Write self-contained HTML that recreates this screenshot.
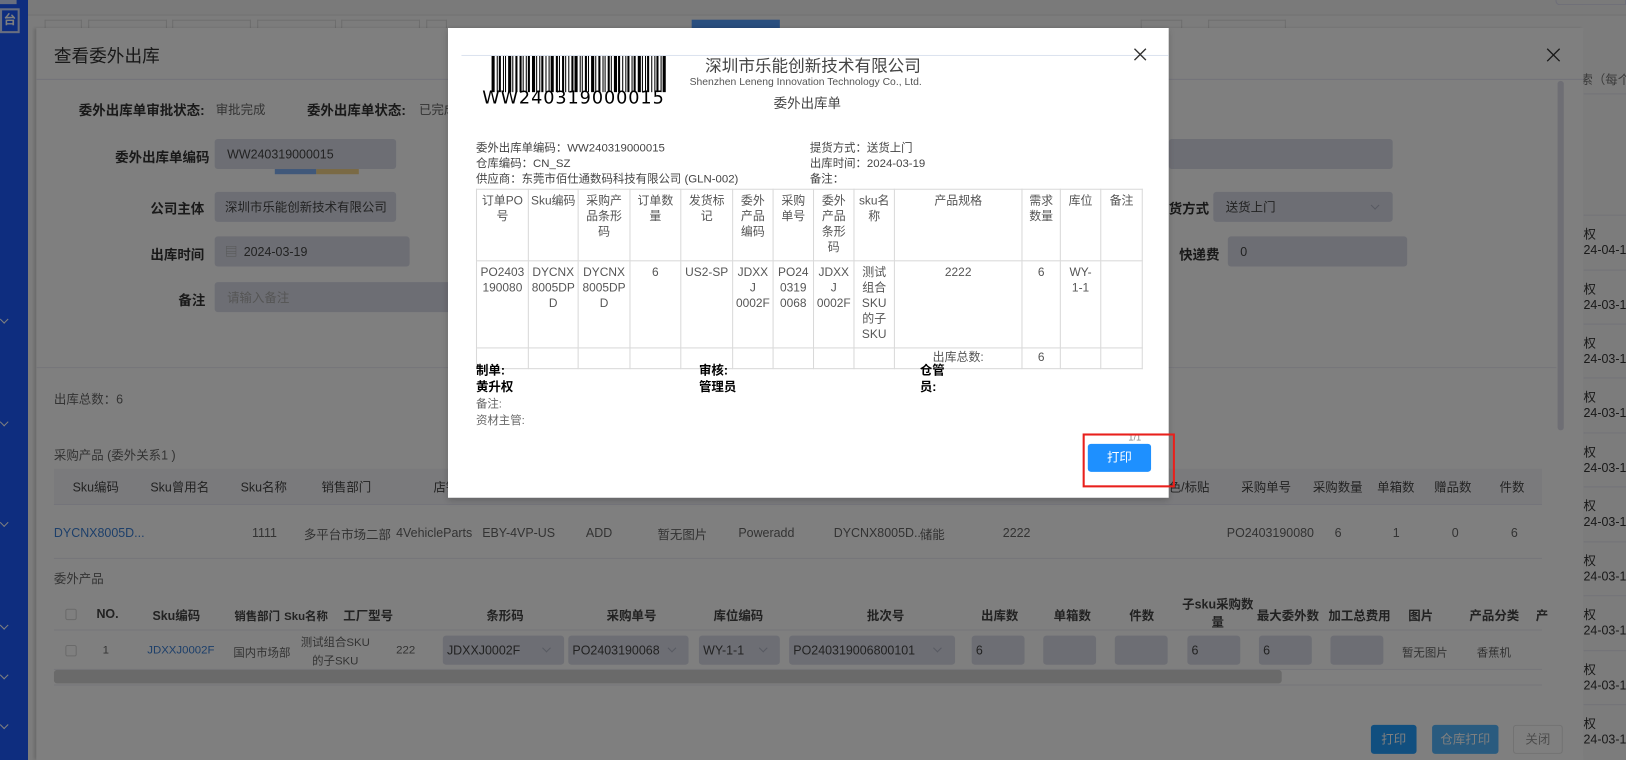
<!DOCTYPE html>
<html style="width:1626px;height:760px;overflow:hidden"><head><meta charset="utf-8"><style>
*{margin:0;padding:0;box-sizing:border-box}
body{width:1626px;height:760px;overflow:hidden;position:relative;background:#f8f8f8;font-family:"Liberation Sans","Noto Sans CJK SC",sans-serif;font-size:12px;color:#333}
#w{position:absolute;left:0;top:0;width:1568px;height:733px;overflow:hidden;transform:scale(1.037);transform-origin:0 0}
.a{position:absolute;white-space:nowrap}
.lb{color:#333;font-weight:bold;font-size:13px}
.v{color:#666;font-size:12px}
.inp{position:absolute;background:#dadde9;border-radius:3px;color:#444;font-size:12px;padding-left:12px;display:flex;align-items:center}
.th{color:#444;font-size:12px}
.td{color:#666;font-size:12px}
.blue{color:#3a7fd5}
.m{color:#444;font-size:11px}
table{border-collapse:collapse;position:absolute;left:459px;top:182px;width:642px;table-layout:fixed}
td{border:1px solid #d9d9d9;font-size:11.5px;color:#555;text-align:center;vertical-align:top;padding:4px 2px;line-height:15px;word-break:break-all}
.chev{position:absolute;width:6px;height:6px;border-right:1px solid #b0b4c4;border-bottom:1px solid #b0b4c4;transform:rotate(45deg)}
#bc{display:flex;justify-content:space-between}
.bar{display:block;height:35px;background:#000}
</style></head><body>
<div id="w">
<!-- sidebar -->
<div class="a" style="left:0;top:0;width:27px;height:733px;background:#1c5bff"></div>
<div class="a" style="left:0;top:8px;width:19px;height:24px;border:2px solid #d0dcff;color:#fff;font-size:12px;font-weight:bold;text-align:center;line-height:18px">台</div>
<div class="a" style="left:0;top:0;width:16px;height:4px;background:#d0dcff"></div>
<div class="chev" style="left:1px;top:305px;border-color:#fff"></div>
<div class="chev" style="left:1px;top:404px;border-color:#fff"></div>
<div class="chev" style="left:1px;top:501px;border-color:#fff"></div>
<div class="chev" style="left:1px;top:600px;border-color:#fff"></div>
<div class="chev" style="left:1px;top:648px;border-color:#fff"></div>
<div class="chev" style="left:1px;top:696px;border-color:#fff"></div>
<!-- top bar -->
<div class="a" style="left:27px;top:0;width:1541px;height:15px;background:#f4f4f4;border-bottom:1px solid #e4e4e4"></div>
<div class="a" style="left:1500px;top:0;width:68px;height:5px;border:1px solid #dcdcf0;border-top:none;border-radius:0 0 0 4px"></div>
<div class="a" style="left:43px;top:19px;width:36px;height:10px;border:1px solid #dcdcdc;border-bottom:none"></div>
<div class="a" style="left:85px;top:19px;width:76px;height:10px;border:1px solid #dcdcdc;border-bottom:none"></div>
<div class="a" style="left:166px;top:19px;width:76px;height:10px;border:1px solid #dcdcdc;border-bottom:none"></div>
<div class="a" style="left:248px;top:19px;width:76px;height:10px;border:1px solid #dcdcdc;border-bottom:none"></div>
<div class="a" style="left:329px;top:19px;width:76px;height:10px;border:1px solid #dcdcdc;border-bottom:none"></div>
<div class="a" style="left:411px;top:19px;width:20px;height:10px;border:1px solid #dcdcdc;border-bottom:none"></div>
<div class="a" style="left:667px;top:19px;width:85px;height:10px;background:#549eff"></div>
<div class="a" style="left:1100px;top:19px;width:40px;height:10px;border:1px solid #dcdcdc;border-bottom:none"></div>
<div class="a" style="left:1165px;top:19px;width:75px;height:10px;border:1px solid #dcdcdc;border-bottom:none"></div>
<!-- right outside list -->
<div class="a" style="left:1527px;top:30px;width:41px;height:703px;background:#f8f8f8"></div>
<div class="a v" style="left:1524px;top:68px;font-size:12px;color:#777">索（每个</div>
<div class="a" style="left:1527px;top:90px;width:41px;height:1px;background:#e6e6f0"></div>
<div id="rl"></div>
<!-- drawer -->
<div class="a" style="left:35px;top:27px;width:1492px;height:706px;background:#fff;box-shadow:-2px 0 3px rgba(0,0,0,.15)"></div>
<div class="a" style="left:52px;top:44px;font-size:17px;color:#333;line-height:22px">查看委外出库</div>
<div class="a" style="left:35px;top:76px;width:1492px;height:1px;background:#e6e6f4"></div>
<svg class="a" style="left:1491px;top:46px" width="14" height="14" viewBox="0 0 14 14"><path d="M1 1L13 13M13 1L1 13" stroke="#333" stroke-width="1.3"/></svg>
<div class="a" style="left:1502px;top:78px;width:6px;height:337px;background:#dcdce8;border-radius:3px"></div>

<div class="a lb" style="left:76px;top:96px">委外出库单审批状态:</div>
<div class="a v" style="left:208px;top:97px">审批完成</div>
<div class="a lb" style="left:296px;top:96px">委外出库单状态:</div>
<div class="a v" style="left:404px;top:97px">已完成</div>

<div class="a lb" style="left:111px;top:141px">委外出库单编码</div>
<div class="inp" style="left:207px;top:134px;width:175px;height:29px">WW240319000015</div>
<div class="a" style="left:265px;top:163px;width:40px;height:5px;background:#80b0f4"></div>
<div class="a" style="left:305px;top:163px;width:41px;height:5px;background:#f4d48a"></div>
<div class="inp" style="left:1127px;top:134px;width:216px;height:29px"></div>

<div class="a lb" style="left:145px;top:191px">公司主体</div>
<div class="inp" style="left:207px;top:185px;width:175px;height:29px;padding-left:10px">深圳市乐能创新技术有限公司</div>
<div class="a lb" style="left:1127px;top:191px">货方式</div>
<div class="inp" style="left:1170px;top:185px;width:173px;height:29px">送货上门</div>
<div class="chev" style="left:1323px;top:195px"></div>

<div class="a lb" style="left:145px;top:235px">出库时间</div>
<div class="inp" style="left:207px;top:228px;width:188px;height:29px;padding-left:10px"><span style="color:#aaa;margin-right:6px">▤</span>2024-03-19</div>
<div class="a lb" style="left:1137px;top:235px">快递费</div>
<div class="inp" style="left:1184px;top:228px;width:173px;height:29px">0</div>

<div class="a lb" style="left:172px;top:279px">备注</div>
<div class="inp" style="left:207px;top:272px;width:240px;height:29px;color:#aaa">请输入备注</div>

<div class="a" style="left:35px;top:354px;width:1466px;height:1px;background:#ececf4"></div>
<div class="a v" style="left:52px;top:376px">出库总数：6</div>
<div class="a v" style="left:52px;top:430px">采购产品 (委外关系1 )</div>

<div class="a" style="left:52px;top:452px;width:1435px;height:35px;background:#f4f4f8;border-bottom:1px solid #e8e8f4"></div>
<div class="a th" style="left:70px;top:461px">Sku编码</div>
<div class="a th" style="left:145px;top:461px">Sku曾用名</div>
<div class="a th" style="left:232px;top:461px">Sku名称</div>
<div class="a th" style="left:310px;top:461px">销售部门</div>
<div class="a th" style="left:418px;top:461px">店铺</div>
<div class="a th" style="left:1127px;top:461px">色/标贴</div>
<div class="a th" style="left:1197px;top:461px">采购单号</div>
<div class="a th" style="left:1266px;top:461px">采购数量</div>
<div class="a th" style="left:1328px;top:461px">单箱数</div>
<div class="a th" style="left:1383px;top:461px">赠品数</div>
<div class="a th" style="left:1446px;top:461px">件数</div>

<div class="a td blue" style="left:52px;top:507px">DYCNX8005D...</div>
<div class="a td" style="left:243px;top:507px">1111</div>
<div class="a td" style="left:293px;top:507px">多平台市场二部</div>
<div class="a td" style="left:382px;top:507px">4VehicleParts</div>
<div class="a td" style="left:465px;top:507px">EBY-4VP-US</div>
<div class="a td" style="left:565px;top:507px">ADD</div>
<div class="a td" style="left:634px;top:507px">暂无图片</div>
<div class="a td" style="left:712px;top:507px">Poweradd</div>
<div class="a td" style="left:804px;top:507px">DYCNX8005D...</div>
<div class="a td" style="left:887px;top:507px">储能</div>
<div class="a td" style="left:967px;top:507px">2222</div>
<div class="a td" style="left:1183px;top:507px">PO2403190080</div>
<div class="a td" style="left:1287px;top:507px">6</div>
<div class="a td" style="left:1343px;top:507px">1</div>
<div class="a td" style="left:1400px;top:507px">0</div>
<div class="a td" style="left:1457px;top:507px">6</div>
<div class="a" style="left:52px;top:538px;width:1435px;height:1px;background:#ececf4"></div>

<div class="a v" style="left:52px;top:549px">委外产品</div>
<div class="a" style="left:63px;top:587px;width:11px;height:11px;border:1px solid #d4d4d4;border-radius:2px"></div>
<div class="a th" style="left:93px;top:585px;font-weight:bold">NO.</div>
<div class="a th" style="left:147px;top:585px;font-weight:bold">Sku编码</div>
<div class="a th" style="left:226px;top:586px;font-weight:bold;font-size:11px">销售部门</div>
<div class="a th" style="left:274px;top:586px;font-weight:bold;font-size:11px">Sku名称</div>
<div class="a th" style="left:331px;top:585px;font-weight:bold">工厂型号</div>
<div class="a th" style="left:469px;top:585px;font-weight:bold">条形码</div>
<div class="a th" style="left:585px;top:585px;font-weight:bold">采购单号</div>
<div class="a th" style="left:688px;top:585px;font-weight:bold">库位编码</div>
<div class="a th" style="left:836px;top:585px;font-weight:bold">批次号</div>
<div class="a th" style="left:946px;top:585px;font-weight:bold">出库数</div>
<div class="a th" style="left:1016px;top:585px;font-weight:bold">单箱数</div>
<div class="a th" style="left:1089px;top:585px;font-weight:bold">件数</div>
<div class="a th" style="left:1140px;top:575px;font-weight:bold;line-height:17px;text-align:center">子sku采购数<br>量</div>
<div class="a th" style="left:1212px;top:585px;font-weight:bold">最大委外数</div>
<div class="a th" style="left:1281px;top:585px;font-weight:bold">加工总费用</div>
<div class="a th" style="left:1358px;top:585px;font-weight:bold">图片</div>
<div class="a th" style="left:1417px;top:585px;font-weight:bold">产品分类</div>
<div class="a th" style="left:1481px;top:585px;font-weight:bold">产</div>
<div class="a" style="left:52px;top:607px;width:1435px;height:1px;background:#ececf4"></div>

<div class="a" style="left:63px;top:622px;width:11px;height:11px;border:1px solid #d4d4d4;border-radius:2px"></div>
<div class="a td" style="left:99px;top:621px;font-size:11px">1</div>
<div class="a blue" style="left:142px;top:621px;font-size:11px">JDXXJ0002F</div>
<div class="a td" style="left:225px;top:621px;font-size:11px">国内市场部</div>
<div class="a td" style="left:290px;top:611px;font-size:11px;line-height:18px;text-align:center">测试组合SKU<br>的子SKU</div>
<div class="a td" style="left:382px;top:621px;font-size:11px">222</div>
<div class="inp" style="left:427px;top:613px;width:117px;height:28px;padding-left:4px">JDXXJ0002F</div>
<div class="inp" style="left:548px;top:613px;width:116px;height:28px;padding-left:4px">PO2403190068</div>
<div class="inp" style="left:674px;top:613px;width:78px;height:28px;padding-left:4px">WY-1-1</div>
<div class="inp" style="left:761px;top:613px;width:160px;height:28px;padding-left:4px">PO240319006800101</div>
<div class="chev" style="left:524px;top:622px"></div><div class="chev" style="left:645px;top:622px"></div><div class="chev" style="left:733px;top:622px"></div><div class="chev" style="left:901px;top:622px"></div>
<div class="inp" style="left:937px;top:613px;width:51px;height:28px;padding-left:4px">6</div>
<div class="inp" style="left:1006px;top:613px;width:51px;height:28px"></div>
<div class="inp" style="left:1075px;top:613px;width:51px;height:28px"></div>
<div class="inp" style="left:1145px;top:613px;width:51px;height:28px;padding-left:4px">6</div>
<div class="inp" style="left:1214px;top:613px;width:51px;height:28px;padding-left:4px">6</div>
<div class="inp" style="left:1283px;top:613px;width:51px;height:28px"></div>
<div class="a td" style="left:1352px;top:621px;font-size:11px">暂无图片</div>
<div class="a td" style="left:1424px;top:621px;font-size:11px">香蕉机</div>
<div class="a" style="left:52px;top:645px;width:1435px;height:1px;background:#ececf4"></div>
<div class="a" style="left:52px;top:646px;width:1184px;height:13px;background:#d4d4d4;border-radius:3px"></div>
<div class="a" style="left:52px;top:660px;width:1435px;height:1px;background:#ececf4"></div>

<div class="a" style="left:1322px;top:699px;width:44px;height:28px;background:#229eff;border-radius:3px;color:#fff;text-align:center;line-height:28px">打印</div>
<div class="a" style="left:1381px;top:699px;width:64px;height:28px;background:#54b6ff;border-radius:3px;color:#fff;text-align:center;line-height:28px">仓库打印</div>
<div class="a" style="left:1459px;top:699px;width:48px;height:28px;border:1px solid #e4e4e4;border-radius:3px;color:#999;text-align:center;line-height:26px">关闭</div>

<!-- mask -->
<div class="a" style="left:0;top:0;width:1568px;height:733px;background:rgba(0,0,0,0.5)"></div>

<!-- modal -->
<div class="a" style="left:432px;top:27px;width:695px;height:453px;background:#fff;box-shadow:0 2px 6px rgba(0,0,0,.2)"></div>
<div class="a" style="left:445px;top:53px;width:682px;height:1px;background:#dce3ef"></div>
<svg class="a" style="left:1093px;top:46px" width="13" height="13" viewBox="0 0 13 13"><path d="M1 1L12 12M12 1L1 12" stroke="#333" stroke-width="1.3"/></svg>
<div class="a" style="left:474px;top:54px;height:35px;overflow:hidden;width:169px" id="bc"></div>
<div class="a" style="left:465px;top:86px;font-size:17px;letter-spacing:0.9px;color:#000;font-family:'DejaVu Sans',sans-serif;line-height:18px">WW240319000015</div>
<div class="a" style="left:680px;top:55px;font-size:16px;color:#444;line-height:20px">深圳市乐能创新技术有限公司</div>
<div class="a" style="left:665px;top:74px;font-size:10px;color:#555;line-height:12px">Shenzhen Leneng Innovation Technology Co., Ltd.</div>
<div class="a" style="left:746px;top:92px;font-size:13px;color:#444;line-height:16px">委外出库单</div>
<div class="a m" style="left:459px;top:134px">委外出库单编码：WW240319000015</div>
<div class="a m" style="left:459px;top:149px">仓库编码：CN_SZ</div>
<div class="a m" style="left:459px;top:164px">供应商：东莞市佰仕通数码科技有限公司 (GLN-002)</div>
<div class="a m" style="left:781px;top:134px">提货方式：送货上门</div>
<div class="a m" style="left:781px;top:149px">出库时间：2024-03-19</div>
<div class="a m" style="left:781px;top:164px">备注：</div>
<table>
<colgroup><col style="width:50px"><col style="width:48px"><col style="width:50px"><col style="width:49px"><col style="width:50px"><col style="width:39px"><col style="width:39px"><col style="width:39px"><col style="width:39px"><col style="width:123px"><col style="width:37px"><col style="width:39px"><col style="width:40px"></colgroup>
<tr style="height:66px"><td>订单PO<br>号</td><td>Sku编码</td><td>采购产<br>品条形<br>码</td><td>订单数<br>量</td><td>发货标<br>记</td><td>委外<br>产品<br>编码</td><td>采购<br>单号</td><td>委外<br>产品<br>条形<br>码</td><td>sku名<br>称</td><td>产品规格</td><td>需求<br>数量</td><td>库位</td><td>备注</td></tr>
<tr style="height:78px"><td>PO2403<br>190080</td><td>DYCNX<br>8005DP<br>D</td><td>DYCNX<br>8005DP<br>D</td><td>6</td><td>US2-SP</td><td>JDXXJ<br>0002F</td><td>PO24<br>0319<br>0068</td><td>JDXXJ<br>0002F</td><td>测试<br>组合<br>SKU<br>的子<br>SKU</td><td>2222</td><td>6</td><td>WY-<br>1-1</td><td></td></tr>
<tr style="height:20px"><td style="padding:2px"></td><td></td><td></td><td></td><td></td><td></td><td></td><td></td><td></td><td style="padding:2px">出库总数:</td><td style="padding:2px">6</td><td></td><td></td></tr>
</table>
<div class="a" style="left:459px;top:349px;font-size:12px;font-weight:bold;color:#000;line-height:16px">制单:<br>黄升权</div>
<div class="a" style="left:674px;top:349px;font-size:12px;font-weight:bold;color:#000;line-height:16px">审核:<br>管理员</div>
<div class="a" style="left:887px;top:349px;font-size:12px;font-weight:bold;color:#000;line-height:16px">仓管<br>员:</div>
<div class="a m" style="left:459px;top:381px;color:#666">备注:</div>
<div class="a m" style="left:459px;top:397px;color:#666">资材主管:</div>
<div class="a" style="left:1088px;top:417px;font-size:9px;color:#888">1/1</div>
<div class="a" style="left:1049px;top:428px;width:61px;height:27px;background:#1e90ff;border-radius:3px;color:#fff;text-align:center;line-height:27px;font-size:12px">打印</div>
<div class="a" style="left:1044px;top:418px;width:89px;height:52px;border:2px solid #e8201c"></div>
</div>
<script>
var w=[3,1,2,1,1,3,1,2,2,1,1,2,3,1,1,2,1,1,3,2,1,2,1,1,2,3,1,1,2,1,3,1,2,1,1,2,1,3,2,1,1,2,1,2,3,1,1,2,1,1,2,1,3];
var h='';for(var i=0;i<w.length;i++){h+='<span class="bar" style="width:'+w[i]+'px"></span>';}
document.getElementById('bc').innerHTML=h;
var r='';var ys=[[225,242,'24-04-1'],[278,295,'24-03-1'],[330,347,'24-03-1'],[382,399,'24-03-1'],[435,452,'24-03-1'],[487,504,'24-03-1'],[540,557,'24-03-1'],[592,609,'24-03-1'],[645,662,'24-03-1'],[697,714,'24-03-1']];
for(var j=0;j<ys.length;j++){r+='<div class="a" style="left:1527px;top:'+(ys[j][0]-18)+'px;width:41px;height:1px;background:#e6e6f0"></div><div class="a" style="left:1527px;top:'+(ys[j][0]-8)+'px;color:#333">权</div><div class="a" style="left:1527px;top:'+(ys[j][1]-8)+'px;color:#333">'+ys[j][2]+'</div>';}
document.getElementById('rl').innerHTML=r;
</script>
</body></html>
